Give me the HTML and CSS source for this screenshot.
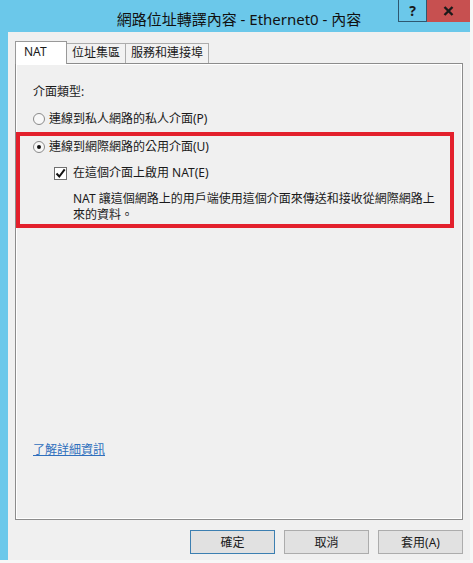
FILE: index.html
```html
<!DOCTYPE html>
<html lang="zh-Hant">
<head>
    <meta charset="UTF-8">
    <title>網路位址轉譯內容 - Ethernet0 - 內容</title>
    <link rel="stylesheet" href="styles.css">
</head>
<body>
    <div class="window">
        <div class="titlebar">
            <div class="title">網路位址轉譯內容 - Ethernet0 - 內容</div>
            <div class="caption-btn help">?</div>
            <div class="caption-btn close">
                <svg width="11" height="10" viewBox="0 0 11 10"><path d="M1.5 1l8 8M9.5 1l-8 8" stroke="#1a1a1a" stroke-width="2.4" fill="none"/></svg>
            </div>
        </div>

        <div class="frame">
            <div class="tabs">
                <div class="tab active nat">NAT</div>
                <div class="tab">位址集區</div>
                <div class="tab">服務和連接埠</div>
            </div>

            <div class="panel">
                <div class="row label">介面類型:</div>
                <div class="row option">
                    <span class="radio"></span>連線到私人網路的私人介面(P)
                </div>

                <div class="highlight">
                    <div class="row option">
                        <span class="radio checked"></span>連線到網際網路的公用介面(U)
                    </div>
                    <div class="row check-row">
                        <span class="checkbox">
                            <svg width="11" height="11" viewBox="0 0 11 11"><path d="M1.5 5.5l2.8 3 5.4-7.2" stroke="#111" stroke-width="2" fill="none"/></svg>
                        </span>在這個介面上啟用 NAT(E)
                    </div>
                    <div class="desc">
                        NAT 讓這個網路上的用戶端使用這個介面來傳送和接收從網際網路上<br>來的資料。
                    </div>
                </div>

                <a class="row more" href="#">了解詳細資訊</a>
            </div>

            <div class="actions">
                <button class="btn default">確定</button>
                <button class="btn">取消</button>
                <button class="btn">套用(A)</button>
            </div>
        </div>
    </div>
</body>
</html>
```

FILE: styles.css
```css
:root {
    --title-color: #6bc8ea;
    --face-color: #f0f0f0;
    --border-color: #acacac;
    --mark-color: #e3202c;
    --link-color: #2f6fbd;
}

* {
    box-sizing: border-box;
}

body {
    margin: 0;
    background: #f7f7f7;
    font-family: "Noto Sans", "Noto Sans CJK TC", sans-serif;
    font-size: 12px;
    color: #1a1a1a;
}

.window {
    width: 470px;
    height: 560px;
    display: flex;
    flex-direction: column;
    background: var(--title-color);
}

.titlebar {
    height: 32px;
    display: flex;
    align-items: flex-start;
}

.title {
    flex: 1;
    padding-left: 80px;
    text-align: center;
    font-size: 15px;
    line-height: 20px;
    padding-top: 9px;
    color: #111;
}

.caption-btn {
    height: 22px;
    display: flex;
    align-items: center;
    justify-content: center;
    font-weight: bold;
}

.help {
    width: 29px;
    border: 1px solid #2e5870;
    border-top: none;
    font-size: 14px;
}

.close {
    width: 43px;
    background: #c75050;
}

.frame {
    flex: 1;
    margin-left: 8px;
    background: var(--face-color);
    padding: 9px 7px 0 7px;
}

/* tabs */
.tabs {
    display: flex;
    align-items: flex-end;
    height: 22px;
}

.tab {
    height: 20px;
    padding: 0 5px;
    line-height: 18px;
    border: 1px solid var(--border-color);
    border-bottom: none;
    margin-left: -1px;
    background: #f2f2f2;
}

.tab.active {
    position: relative;
    z-index: 1;
    height: 23px;
    margin-bottom: -1px;
    margin-left: 0;
    background: #fff;
    border-color: #999;
    line-height: 20px;
}

.tab.nat {
    width: 52px;
    padding-left: 8px;
}

.panel {
    height: 457px;
    border: 1px solid #8c8c8c;
    box-shadow: inset 0 0 0 1px #fff;
    padding-top: 19px;
}

.row {
    display: flex;
    align-items: center;
    height: 18px;
    line-height: 18px;
    white-space: nowrap;
}

.label {
    padding-left: 17px;
}

.panel > .option {
    margin-top: 9px;
    padding-left: 17px;
}

.radio {
    width: 12px;
    height: 12px;
    margin-right: 4px;
    border: 1px solid #8a8a8a;
    border-radius: 50%;
    background: #f8f8f8;
    display: flex;
    align-items: center;
    justify-content: center;
}

.radio.checked::after {
    content: "";
    width: 4px;
    height: 4px;
    border-radius: 50%;
    background: #111;
}

.highlight {
    margin: 4px 8px 0 0;
    border: 4px solid var(--mark-color);
    padding: 2px 0 1px 13px;
}

.check-row {
    margin-top: 8px;
    padding-left: 21px;
}

.checkbox {
    width: 13px;
    height: 13px;
    margin-right: 6px;
    border: 1px solid #707070;
    background: #fff;
    display: flex;
    align-items: center;
    justify-content: center;
}

.desc {
    margin-top: 9px;
    padding-left: 40px;
    line-height: 16px;
    white-space: nowrap;
}

.more {
    display: inline-block;
    margin: 213px 0 0 17px;
    color: var(--link-color);
    text-decoration: underline;
}

.actions {
    display: flex;
    justify-content: flex-end;
    gap: 9px;
    margin-top: 10px;
}

.btn {
    width: 85px;
    height: 24px;
    padding: 0;
    border: 1px solid var(--border-color);
    background: #e1e1e1;
    font-family: inherit;
    font-size: 12px;
    color: #1a1a1a;
}

.btn.default {
    border-color: #3c7fb1;
}
```
